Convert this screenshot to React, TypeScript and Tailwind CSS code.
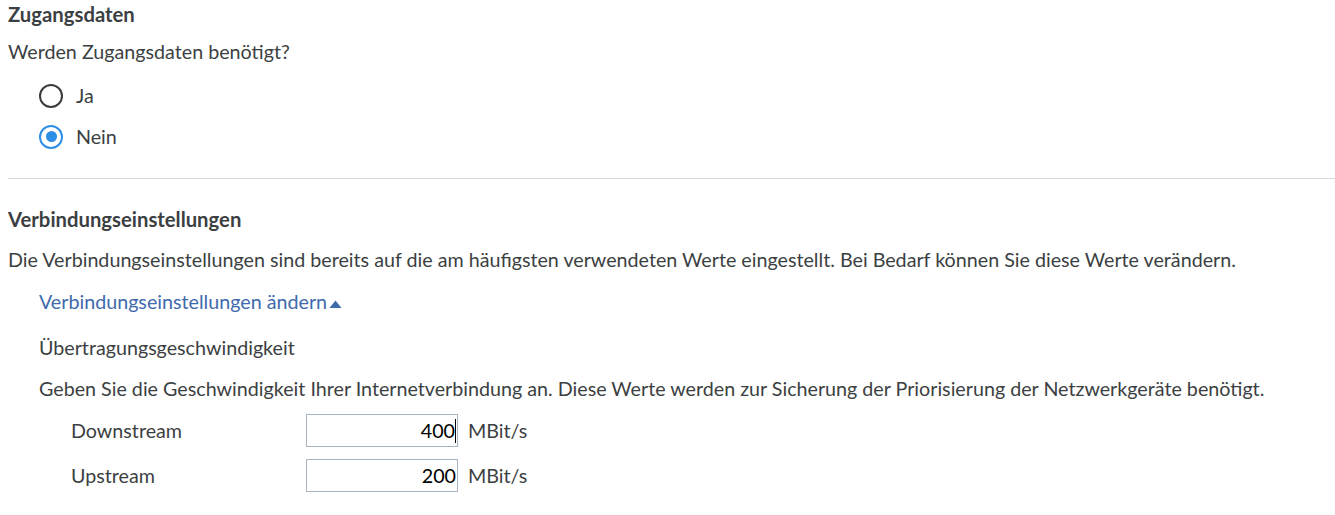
import React from "react";

const Radio = ({ label, checked }: { label: string; checked?: boolean }) => (
  <label className="flex h-[41px] items-center gap-[13px] pl-[31px]">
    <span
      className={
        checked
          ? "flex h-[24px] w-[24px] items-center justify-center rounded-full border-[2.5px] border-[#2d8ee5]"
          : "flex h-[24px] w-[24px] items-center justify-center rounded-full border-[2.5px] border-[#3c3c3c]"
      }
    >
      {checked && <span className="h-[11px] w-[11px] rounded-full bg-[#2d8ee5]" />}
    </span>
    <span>{label}</span>
  </label>
);

const SpeedRow = ({ label, value, caret }: { label: string; value: string; caret?: boolean }) => (
  <div className="flex h-[45px] items-center pl-[71px]">
    <span className="w-[235px]">{label}</span>
    <div className="flex h-[33px] w-[152px] items-center justify-end border border-[#a9b6c2] bg-white pr-[1px] text-black">
      <span>{value}</span>
      {caret && <span className="h-[24px] w-[1px] bg-black" />}
    </div>
    <span className="ml-[10px]">MBit/s</span>
  </div>
);

export default function App() {
  return (
    <div className="h-[515px] w-[1335px] bg-white pl-[8px] text-[19.7px] leading-[24px] text-[#3c3f42] [font-family:Lato,'Noto_Sans',sans-serif]">
      {/* Zugangsdaten */}
      <div className="pt-[2px]">
        <h2 className="text-[20.3px] font-bold leading-[24px]">Zugangsdaten</h2>
        <p className="mt-[14px]">Werden Zugangsdaten benötigt?</p>
        <div className="mt-[11px]">
          <Radio label="Ja" />
          <Radio label="Nein" checked />
        </div>
      </div>

      <hr className="mt-[21px] border-t border-[#d9d9d9]" />

      {/* Verbindungseinstellungen */}
      <h2 className="mt-[28px] text-[20.3px] font-bold leading-[24px]">Verbindungseinstellungen</h2>
      <p className="mt-[17px]">
        Die Verbindungseinstellungen sind bereits auf die am häufigsten verwendeten Werte eingestellt. Bei Bedarf können Sie diese Werte verändern.
      </p>
      <div className="pl-[31px]">
        <a href="#" className="mt-[18px] flex items-center text-[#3f6aac]">
          Verbindungseinstellungen ändern
          <svg width="13" height="10" viewBox="0 0 13 10" className="ml-[2px] mt-[3px]">
            <polygon points="0.5,9 6.5,1.5 12.5,9" fill="#3f6aac" />
          </svg>
        </a>
        <p className="mt-[22px]">Übertragungsgeschwindigkeit</p>
        <p className="mt-[17px]">
          Geben Sie die Geschwindigkeit Ihrer Internetverbindung an. Diese Werte werden zur Sicherung der Priorisierung der Netzwerkgeräte benötigt.
        </p>
      </div>
      <div className="mt-[7px] -ml-[8px]">
        <SpeedRow label="Downstream" value="400" caret />
        <SpeedRow label="Upstream" value="200" />
      </div>
    </div>
  );
}
